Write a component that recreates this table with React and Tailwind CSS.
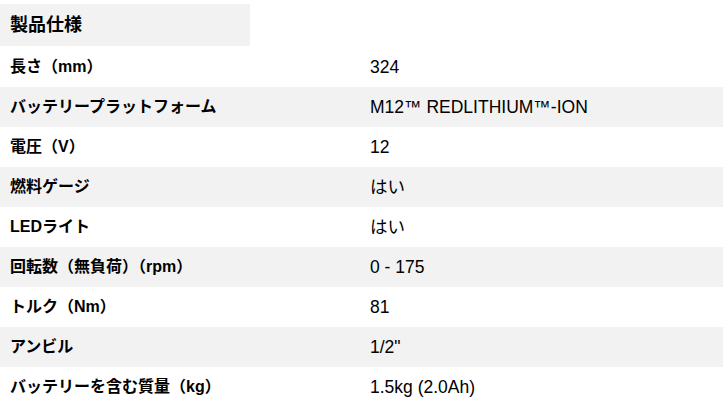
import React from "react";

const specs = [
  ["長さ（mm）", "324"],
  ["バッテリープラットフォーム", "M12™ REDLITHIUM™-ION"],
  ["電圧（V）", "12"],
  ["燃料ゲージ", "はい"],
  ["LEDライト", "はい"],
  ["回転数（無負荷）（rpm）", "0 - 175"],
  ["トルク（Nm）", "81"],
  ["アンビル", "1/2\""],
  ["バッテリーを含む質量（kg）", "1.5kg (2.0Ah)"],
];

const App = () => {
  return (
    <div className="w-[723px] h-[414px] bg-white text-black overflow-hidden pt-[4px] font-['Liberation_Sans','Noto_Sans_CJK_JP',sans-serif]">
      <div className="w-[250px] h-[42px] bg-[#f2f2f2] flex items-center pl-[10px]">
        <h2 className="text-[18px] font-bold">製品仕様</h2>
      </div>

      <div className="mt-[1px]">
        {specs.map(([label, value], i) => (
          <div
            key={label}
            className={`flex items-center h-[40px] ${i % 2 === 1 ? "bg-[#f2f2f2]" : "bg-white"}`}
          >
            <div className="w-[370px] pl-[10px] text-[16px] font-bold">{label}</div>
            <div className="text-[17.5px]">{value}</div>
          </div>
        ))}
      </div>
    </div>
  );
};

export default App;
